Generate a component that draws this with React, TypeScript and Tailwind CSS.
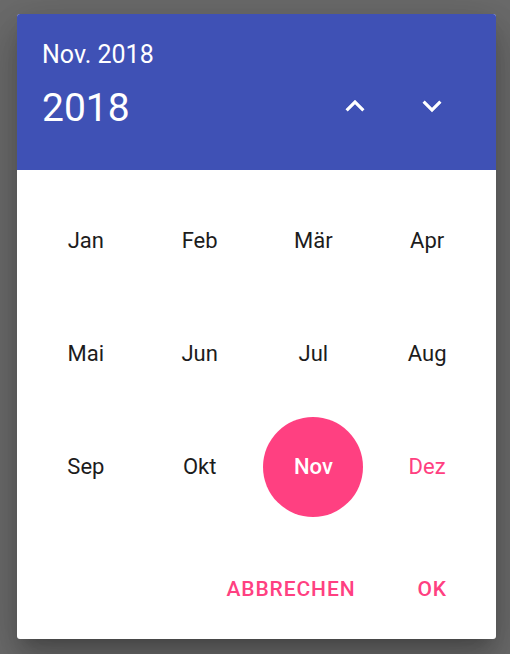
import React from "react";

const months = ["Jan", "Feb", "Mär", "Apr", "Mai", "Jun", "Jul", "Aug", "Sep", "Okt", "Nov", "Dez"];

export default function App() {
  return (
    <div
      className="w-[510px] h-[654px] bg-[#6b6b6b] pt-[14px] pl-[17px]"
      style={{ fontFamily: "Roboto, 'Liberation Sans', sans-serif" }}
    >
      <div className="w-[479px] h-[625px] bg-white rounded-[3px] overflow-hidden flex flex-col shadow-[0_11px_15px_-7px_rgba(0,0,0,0.2),0_24px_38px_3px_rgba(0,0,0,0.14),0_9px_46px_8px_rgba(0,0,0,0.12)]">
        <div className="h-[156px] bg-[#3f51b5] text-white pl-[25px] pr-[45px] flex flex-col">
          <div className="mt-[23px] text-[25px] leading-[36px] font-normal">Nov. 2018</div>
          <div className="flex items-center justify-between mt-[10px]">
            <div className="text-[39px] leading-[50px] font-normal">2018</div>
            <div className="flex items-center gap-[39px] mb-[4px]">
              <svg width="38" height="38" viewBox="0 0 24 24" fill="white">
                <path d="M7.41 15.41L12 10.83l4.59 4.58L18 14l-6-6-6 6z" />
              </svg>
              <svg width="38" height="38" viewBox="0 0 24 24" fill="white">
                <path d="M7.41 8.59L12 13.17l4.59-4.58L18 10l-6 6-6-6 1.41-1.41z" />
              </svg>
            </div>
          </div>
        </div>
        <div className="grid grid-cols-4 px-[12px] pt-[14px]">
          {months.map((m) => {
            const selected = m === "Nov";
            const current = m === "Dez";
            return (
              <div key={m} className="h-[113px] flex items-center justify-center">
                {selected ? (
                  <div className="w-[100px] h-[100px] rounded-full bg-[#ff4081] text-white text-[22px] font-medium flex items-center justify-center">
                    {m}
                  </div>
                ) : (
                  <div
                    className={
                      "text-[22px] font-normal " + (current ? "text-[#ff4081]" : "text-[#1c1c1c]")
                    }
                  >
                    {m}
                  </div>
                )}
              </div>
            );
          })}
        </div>
        <div className="flex justify-end items-center pr-[49px] pt-[53px] gap-[62px] text-[#ff4081] text-[21px] font-medium tracking-[0.9px]">
          <span className="leading-[26px]">ABBRECHEN</span>
          <span className="leading-[26px]">OK</span>
        </div>
      </div>
    </div>
  );
}
